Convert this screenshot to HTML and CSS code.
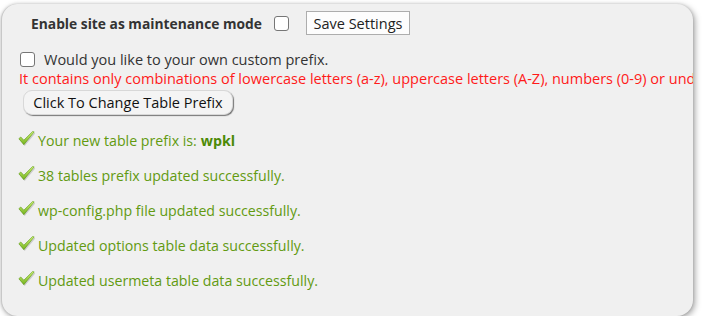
FILE: index.html
```html
<!DOCTYPE html>
<html>
<head>
<meta charset="utf-8">
<link rel="stylesheet" href="styles.css">
</head>
<body>
<div class="panel">
  <div class="row-maint">
    <span class="maint-label">Enable site as maintenance mode</span>
    <input type="checkbox" class="cb cb-maint">
    <button class="btn-save">Save Settings</button>
  </div>
  <div class="row-prefix">
    <input type="checkbox" class="cb">
    <span class="prefix-label">Would you like to your own custom prefix.</span>
  </div>
  <div class="warn">It contains only combinations of lowercase letters (a-z), uppercase letters (A-Z), numbers (0-9) or underscores (_).</div>
  <button class="btn-change">Click To Change Table Prefix</button>
  <ul class="msgs">
    <li><svg class="chk" viewBox="0 0 16 14"><defs><linearGradient id="g" x1="0" y1="0" x2="0" y2="1"><stop offset="0" stop-color="#d2f57a"/><stop offset="1" stop-color="#74b21e"/></linearGradient></defs><path d="M1 8 L5.5 13.5 L15.5 1.5 L14.5 1 L5.5 9.5 L2.5 6.5 Z" fill="#888" opacity=".35" transform="translate(0.8,0.6)"/><path d="M0.8 7.2 L5.5 12.8 L15.2 0.8 L13.8 0.4 L5.5 8.6 L2.6 5.6 Z" fill="url(#g)" stroke="#5f9a14" stroke-width=".6" stroke-linejoin="round"/></svg>Your new table prefix is: <b>wpkl</b></li>
    <li><svg class="chk" viewBox="0 0 16 14"><path d="M1 8 L5.5 13.5 L15.5 1.5 L14.5 1 L5.5 9.5 L2.5 6.5 Z" fill="#888" opacity=".35" transform="translate(0.8,0.6)"/><path d="M0.8 7.2 L5.5 12.8 L15.2 0.8 L13.8 0.4 L5.5 8.6 L2.6 5.6 Z" fill="url(#g)" stroke="#5f9a14" stroke-width=".6" stroke-linejoin="round"/></svg>38 tables prefix updated successfully.</li>
    <li><svg class="chk" viewBox="0 0 16 14"><path d="M1 8 L5.5 13.5 L15.5 1.5 L14.5 1 L5.5 9.5 L2.5 6.5 Z" fill="#888" opacity=".35" transform="translate(0.8,0.6)"/><path d="M0.8 7.2 L5.5 12.8 L15.2 0.8 L13.8 0.4 L5.5 8.6 L2.6 5.6 Z" fill="url(#g)" stroke="#5f9a14" stroke-width=".6" stroke-linejoin="round"/></svg>wp-config.php file updated successfully.</li>
    <li><svg class="chk" viewBox="0 0 16 14"><path d="M1 8 L5.5 13.5 L15.5 1.5 L14.5 1 L5.5 9.5 L2.5 6.5 Z" fill="#888" opacity=".35" transform="translate(0.8,0.6)"/><path d="M0.8 7.2 L5.5 12.8 L15.2 0.8 L13.8 0.4 L5.5 8.6 L2.6 5.6 Z" fill="url(#g)" stroke="#5f9a14" stroke-width=".6" stroke-linejoin="round"/></svg>Updated options table data successfully.</li>
    <li><svg class="chk" viewBox="0 0 16 14"><path d="M1 8 L5.5 13.5 L15.5 1.5 L14.5 1 L5.5 9.5 L2.5 6.5 Z" fill="#888" opacity=".35" transform="translate(0.8,0.6)"/><path d="M0.8 7.2 L5.5 12.8 L15.2 0.8 L13.8 0.4 L5.5 8.6 L2.6 5.6 Z" fill="url(#g)" stroke="#5f9a14" stroke-width=".6" stroke-linejoin="round"/></svg>Updated usermeta table data successfully.</li>
  </ul>
</div>
</body>
</html>
```
FILE: styles.css
```css
html, body { margin: 0; padding: 0; background: #fff; }
body { font-family: "Open Sans", "Noto Sans", sans-serif; font-size: 14.5px; color: #333; }
.panel {
  box-sizing: border-box;
  width: 692px; height: 312px;
  margin: 4px 0 0 1px;
  background: #f0f0f0;
  border-radius: 16px;
  box-shadow: 2px 2px 6px rgba(0,0,0,.35), 0 0 3px rgba(0,0,0,.15);
  border-left: 1px solid #c8c8c8;
  overflow: hidden;
  padding: 7px 0 0 17px;
  white-space: nowrap;
}
.row-maint { display: flex; align-items: center; height: 24px; padding-left: 12px; }
.maint-label { font-weight: bold; font-size: 13.8px; color: #333; }
.cb {
  appearance: none; -webkit-appearance: none;
  width: 15px; height: 15px; margin: 0;
  border: 1px solid #767676; border-radius: 3px; background: #fff;
  box-sizing: border-box;
}
.cb-maint { margin-left: 12px; }
.btn-save {
  margin-left: 17px; height: 24px; width: 104px; padding: 0;
  font-family: inherit; font-size: 14.5px; color: #222;
  background: #fdfdfd; border: 1px solid #adadad; border-radius: 0;
}
.row-prefix { display: flex; align-items: center; gap: 9px; margin-top: 16px; height: 16px; padding-left: 1px; }
.warn { color: #ff1a1a; margin-top: 3px; line-height: 18px; }
.btn-change {
  margin: 2px 0 0 4px; height: 25px; width: 210px; padding: 0;
  font-family: inherit; font-size: 14.5px; color: #111;
  background: #f4f4f4; border: 1px solid #d8d8d8; border-radius: 9px;
  box-shadow: 1px 1px 1px #777;
}
.msgs { list-style: none; margin: 16px 0 0 0; padding: 0; font-size: 14.2px; }
.msgs li { display: flex; align-items: center; height: 18px; margin-bottom: 17px; color: #629a10; }
.msgs b { margin-left: 4px; color: #4c8a06; }
.chk { width: 17px; height: 15px; margin-right: 3px; margin-top: -4px; margin-left: -1px; }
```
